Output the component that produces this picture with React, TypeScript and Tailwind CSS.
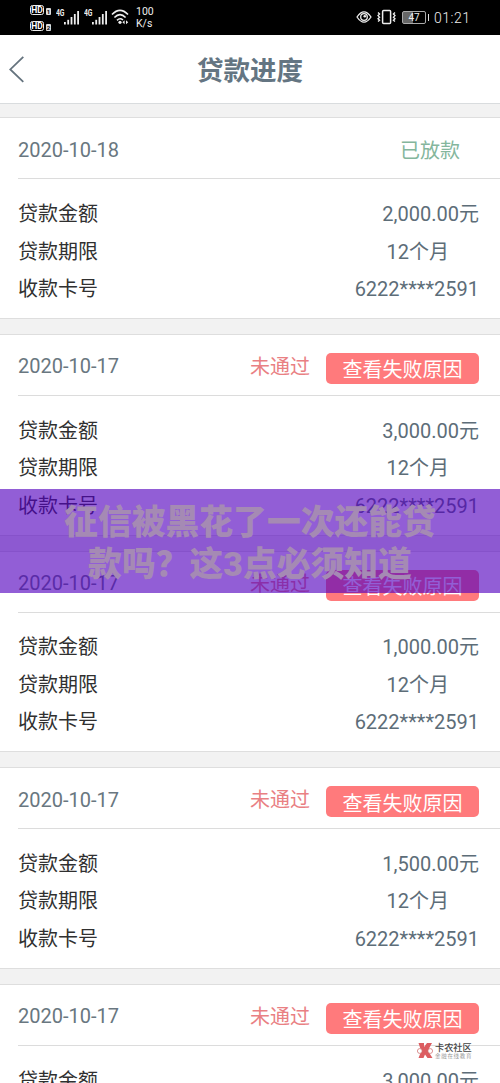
import React from "react";

type Loan = { date: string; amount: string; passed: boolean };

const loans: Loan[] = [
  { date: "2020-10-18", amount: "2,000.00元", passed: true },
  { date: "2020-10-17", amount: "3,000.00元", passed: false },
  { date: "2020-10-17", amount: "1,000.00元", passed: false },
  { date: "2020-10-17", amount: "1,500.00元", passed: false },
  { date: "2020-10-17", amount: "3,000.00元", passed: false },
];

function HdBadge({ sim }: { sim: string }) {
  return (
    <div className="flex h-[10px] items-end gap-[2px]">
      <span className="flex h-[10px] w-[14px] items-center justify-center rounded-[2.5px] border border-[#eee] text-[8.5px] leading-none font-bold text-white">
        HD
      </span>
      <span className="flex h-[7px] w-[5px] items-center justify-center rounded-[1px] bg-[#ddd] text-[6px] leading-none font-bold text-black">
        {sim}
      </span>
    </div>
  );
}

function Signal() {
  return (
    <div className="flex w-[28px] items-start">
      <span className="mt-[-1px] w-[8px] origin-top-left scale-x-85 scale-y-115 text-[8px] leading-[8px] font-bold tracking-[-0.3px]">4G</span>
      <svg width="16" height="15" viewBox="0 0 16 15" fill="#eee">
        <rect x="0" y="12" width="1.8" height="2.5" />
        <rect x="3.3" y="9.8" width="1.8" height="4.7" />
        <rect x="6.6" y="7" width="1.8" height="7.5" />
        <rect x="9.9" y="4" width="1.8" height="10.5" />
        <rect x="13.2" y="1" width="1.8" height="13.5" />
      </svg>
    </div>
  );
}

function StatusBar() {
  return (
    <div className="flex h-[35px] shrink-0 items-start bg-black text-[#eee]">
      <div className="mt-[5px] ml-[30px] flex w-[26px] flex-col gap-[6px]">
        <HdBadge sim="1" />
        <HdBadge sim="2" />
      </div>
      <div className="mt-[10px] flex">
        <Signal />
        <Signal />
      </div>
      <svg className="mt-[9px] ml-[-1px]" width="18" height="16" viewBox="0 0 18 16" fill="none" stroke="#eee" strokeWidth="1.6">
        <path d="M1 5.5Q9-2.8 17 5.5M3.4 8.5Q9 2.8 14.6 8.5M6 11.3Q9 8.4 12 11" />
        <circle cx="9" cy="13.3" r="1.6" fill="#eee" stroke="none" />
        <path d="M11.4 13.2l2.2-2v4zM17.2 13.2l-2.2-2v4z" fill="#eee" stroke="none" />
      </svg>
      <div className="mt-[6px] ml-[7px] w-[30px] text-[10.5px] leading-[12px]">
        <div>100</div>
        <div>K/s</div>
      </div>
      <svg className="mt-[10px] ml-auto" width="16" height="14" viewBox="0 0 16 14" fill="none" stroke="#eee" strokeWidth="1.3">
        <path d="M1 7Q8-3.4 15 7Q8 17.4 1 7Z" />
        <circle cx="8" cy="7" r="3.3" />
        <circle cx="8.8" cy="6.2" r="1.3" fill="#eee" stroke="none" />
      </svg>
      <svg className="mt-[9px] ml-[5px]" width="19" height="16" viewBox="0 0 19 16" fill="none" stroke="#eee" strokeWidth="1.5">
        <rect x="5.6" y="1.5" width="8" height="13" rx="1" />
        <path d="M1 3.5l1.6 1.5L1 6.6l1.6 1.6L1 9.8l1.6 1.5L1 12.6M18 3.5l-1.6 1.5L18 6.6l-1.6 1.6L18 9.8l-1.6 1.5L18 12.6" strokeWidth="1.3" />
      </svg>
      <div className="mt-[11px] ml-[6px] flex items-center gap-[1.5px]">
        <div className="flex h-[13px] w-[24px] items-center justify-center rounded-[2px] border border-[#aaa] bg-linear-to-r from-[#666] from-45% to-black to-45% text-[10px] leading-none">
          47
        </div>
        <div className="h-[7px] w-[1.5px] bg-[#ddd]" />
      </div>
      <div className="mt-[9px] mr-[29px] ml-[5px] w-[37px] text-[14px] leading-[18px] font-light tracking-[0.5px] whitespace-nowrap">01:21</div>
    </div>
  );
}

function Row({ label, value, inset }: { label: string; value: string; inset?: boolean }) {
  return (
    <div className="flex h-[37.5px] items-center justify-between pl-[18px]">
      <span className="pt-[1px] text-[#303030]">{label}</span>
      <span className={inset ? "pt-[1px] pr-[51px] text-[#5d6d78]" : "pt-[1px] pr-[21px] text-[#5d6d78]"}>{value}</span>
    </div>
  );
}

function LoanCard({ loan }: { loan: Loan }) {
  return (
    <section className="mb-[15px] h-[201.6px] shrink-0 border-y border-[#dedede] bg-white text-[20px] leading-[30px]">
      <div className="ml-[18px] flex h-[61px] items-center border-b border-[#dcdcdc]">
        <span className="mr-auto pt-[3px] text-[#697780]">{loan.date}</span>
        {loan.passed ? (
          <span className="mr-[40px] pt-[5px] text-[#84b69c]">已放款</span>
        ) : (
          <>
            <span className="mr-[16px] pt-[4px] text-[#e98083]">未通过</span>
            <button className="mt-[7px] mr-[21px] flex h-[31px] w-[153px] items-center justify-center rounded-[5px] bg-[#ff7a7c] pt-[4px] text-white">
              查看失败原因
            </button>
          </>
        )}
      </div>
      <div className="pt-[15.5px]">
        <Row label="贷款金额" value={loan.amount} />
        <Row label="贷款期限" value="12个月" inset />
        <Row label="收款卡号" value="6222****2591" />
      </div>
    </section>
  );
}

function Watermark() {
  return (
    <div className="absolute top-[1042px] left-[417px] flex items-center gap-[2px]">
      <svg width="16" height="17" viewBox="0 0 16 17">
        <path d="M1.5 1h5.5v4l3-4h5l-3 5.5v4l3.5 5.5h-5l-2.5-3.5-1.5 3.5H1.5l2-5v-4z" fill="#dc5d61" />
        <circle cx="2.8" cy="9" r="2.4" fill="#fff" stroke="#c66" strokeWidth=".7" />
        <circle cx="13.2" cy="9" r="2.4" fill="#fff" stroke="#c66" strokeWidth=".7" />
      </svg>
      <div className="w-[38px] whitespace-nowrap">
        <div className="text-[9.2px] leading-[10px] font-medium text-[#444]">卡农社区</div>
        <div className="text-[5.5px] leading-[6px] tracking-[0.7px] text-[#999]">金融在线教育</div>
      </div>
    </div>
  );
}

export default function App() {
  return (
    <div className="relative flex h-[1083px] w-[500px] flex-col overflow-hidden bg-[#f2f2f2] font-[Roboto,'Noto_Sans_CJK_SC',sans-serif]">
      <StatusBar />
      <header className="grid h-[69px] shrink-0 grid-cols-[1fr_auto_1fr] items-center border-b border-[#d9dcde] bg-white">
        <svg className="mb-[1px] ml-[9px]" width="16" height="28" viewBox="0 0 16 28" fill="none" stroke="#65737e" strokeWidth="1.8">
          <path d="M14.3 1.8L1.3 14.4l13 12.4" />
        </svg>
        <h1 className="pt-[4px] text-[26.5px] leading-[40px] font-bold text-[#647582]">贷款进度</h1>
      </header>
      <main className="flex flex-col pt-[13.4px]">
        {loans.map((loan, i) => (
          <LoanCard key={i} loan={loan} />
        ))}
      </main>
      <div className="absolute top-[489px] left-0 flex h-[104px] w-full flex-col items-center bg-[rgba(82,0,190,0.63)] pt-[13px] text-[33.8px] leading-[41.5px] font-black whitespace-nowrap text-[#a58ab4]">
        <div>征信被黑花了一次还能贷</div>
        <div>款吗？这3点必须知道</div>
      </div>
      <Watermark />
    </div>
  );
}
